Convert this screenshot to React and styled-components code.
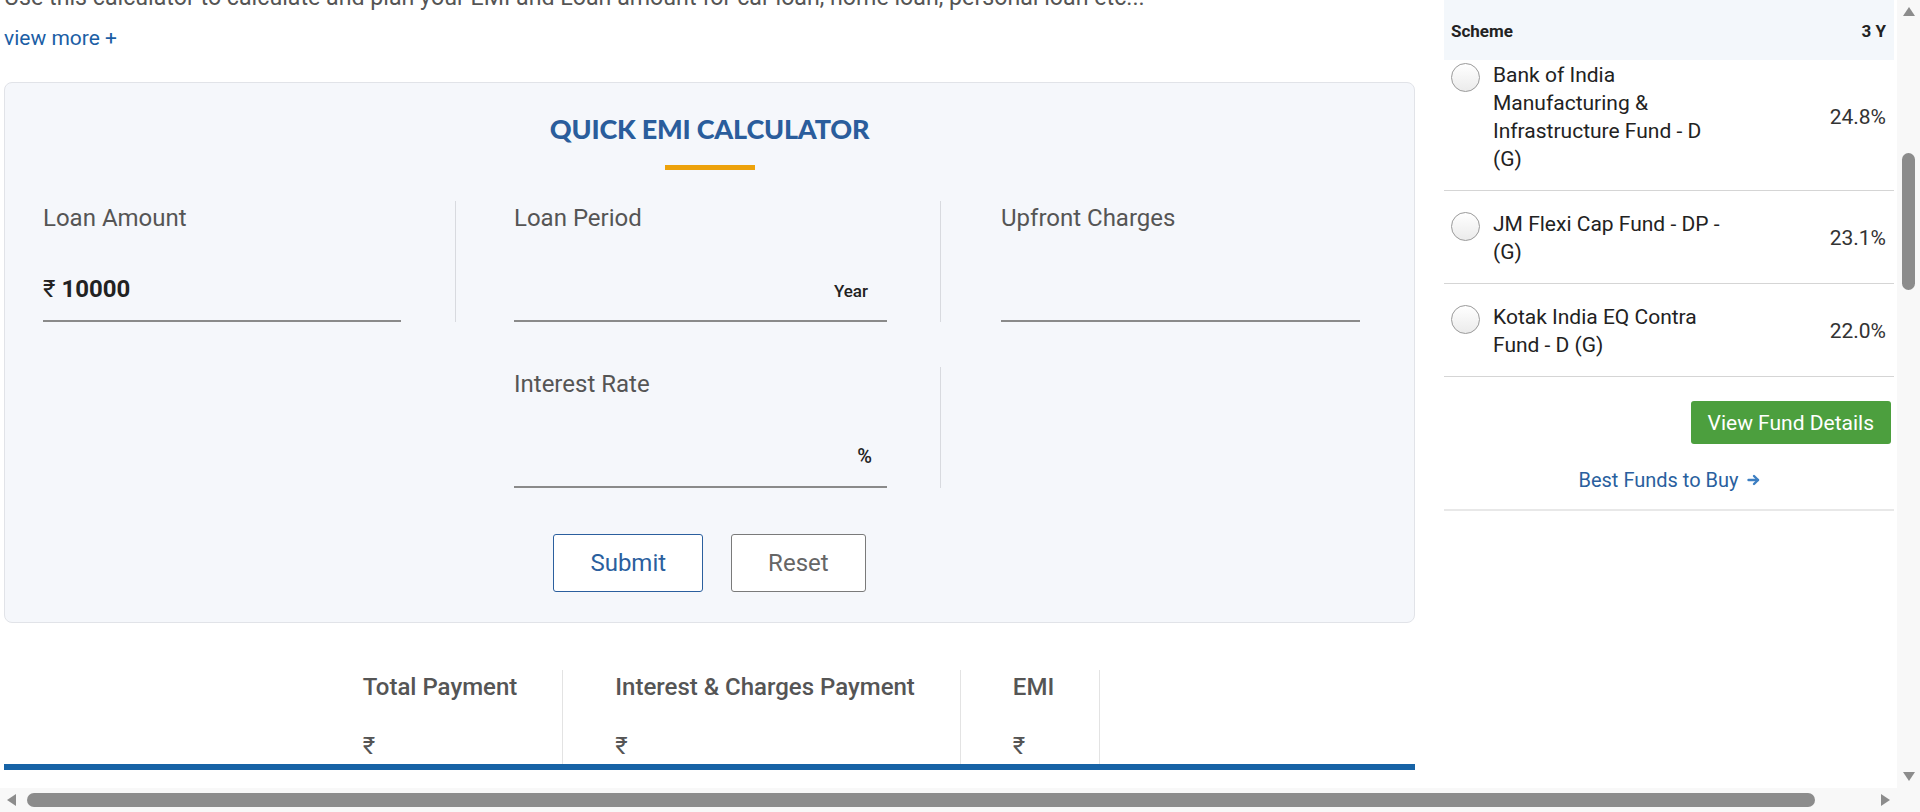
import styled, { createGlobalStyle } from 'styled-components'

const GlobalStyle = createGlobalStyle`
    html, body {
        margin: 0;
        padding: 0;
        background: #ffffff;
        overflow: hidden;
    }
    body {
        font-family: Roboto, "Liberation Sans", Arial, sans-serif;
    }
    * {
        box-sizing: border-box;
    }
`

const Screen = styled.div`
    width: 1920px;
    height: 812px;
    display: flex;
    flex-direction: column;
    overflow: hidden;
`

const TopRow = styled.div`
    display: flex;
    height: 788px;
`

const BottomRow = styled.div`
    display: flex;
    height: 24px;
    background: #f8f8f8;
`

const Viewport = styled.div`
    flex: 1;
    overflow: hidden;
`

const Page = styled.div`
    display: flex;
    align-items: flex-start;
    gap: 29px;
    padding-left: 4px;
`

// ---------- main column ----------

const MainCol = styled.div`
    width: 1411px;
    flex: none;
`

const Intro = styled.p`
    margin: -17px 0 0;
    font-size: 23.2px;
    line-height: 28px;
    color: #555555;
    white-space: nowrap;
`

const ViewMore = styled.a`
    display: block;
    margin-top: 13px;
    font-size: 21px;
    line-height: 28px;
    color: #1b5ea5;
    text-decoration: none;
`

const Card = styled.div`
    margin-top: 30px;
    background: #f5f7fb;
    border: 1px solid #e1e3e8;
    border-radius: 8px;
    padding: 29px 0 30px;
`

const Title = styled.h2`
    margin: 0;
    text-align: center;
    font-family: Lato, "Open Sans", sans-serif;
    font-weight: 900;
    font-size: 27px;
    line-height: 34px;
    color: #2a5d9c;
    letter-spacing: -0.2px;
`

const Accent = styled.div`
    width: 90px;
    height: 5px;
    margin: 19px auto 0;
    background: #eda20b;
`

const FieldGrid = styled.div`
    display: grid;
    grid-template-columns: 413px 485px 1fr;
    row-gap: 45px;
    margin: 31px 54px 0 38px;
`

const Cell = styled.div`
    height: 121px;
    padding: ${p => p.$pad};
    border-right: ${p => (p.$divider ? '1px solid #d8dadf' : 'none')};
`

const Label = styled.div`
    font-size: 24px;
    line-height: 34px;
    color: #555555;
`

const Field = styled.div`
    height: 87px;
    padding-top: 40px;
    display: flex;
    align-items: baseline;
    border-bottom: 2px solid #8a8a8a;
`

const Value = styled.span`
    font-size: 24px;
    line-height: 28px;
    font-weight: 700;
    color: #222222;
`

const Currency = styled.span`
    font-weight: 400;
`

const Unit = styled.span`
    margin-left: auto;
    padding-right: ${p => p.$right}px;
    font-size: ${p => p.$size}px;
    line-height: ${p => p.$lh}px;
    font-weight: 500;
    color: #222222;
`

const Actions = styled.div`
    display: flex;
    justify-content: center;
    gap: 28px;
    margin-top: 46px;
`

const Btn = styled.button`
    height: 58px;
    padding: 0 36px;
    background: #ffffff;
    border: 1px solid ${p => (p.$primary ? '#2b5f9e' : '#7a7a7a')};
    border-radius: 3px;
    color: ${p => (p.$primary ? '#2b5f9e' : '#666666')};
    font-family: Roboto, sans-serif;
    font-size: 24px;
`

const Results = styled.div`
    display: flex;
    justify-content: center;
    margin-top: 47px;
    padding-right: 8px;
    border-bottom: 6px solid #1763a6;
`

const ResultCell = styled.div`
    padding: 0 45px 1px 52px;
    border-right: 1px solid #e3e3e3;
`

const ResultHead = styled.div`
    font-size: 24px;
    line-height: 34px;
    font-weight: 500;
    color: #555555;
    white-space: nowrap;
`

const ResultValue = styled.div`
    margin-top: 25px;
    font-size: 24px;
    line-height: 34px;
    color: #555555;
`

// ---------- sidebar ----------

const Sidebar = styled.aside`
    width: 450px;
    flex: none;
`

const SideHead = styled.div`
    height: 60px;
    display: flex;
    align-items: center;
    justify-content: space-between;
    padding: 1px 8px 0 7px;
    background: #f3f7fb;
    font-size: 17px;
    font-weight: 700;
    color: #222222;
`

const FundList = styled.div`
    overflow: hidden;
`

const FundRows = styled.div`
    margin-top: -18px;
`

const FundRow = styled.div`
    display: flex;
    align-items: flex-start;
    padding: 19px 8px 17px 7px;
    border-bottom: 1px solid #d5d5d5;
`

const Radio = styled.span`
    flex: none;
    width: 29px;
    height: 29px;
    margin-top: 2px;
    border-radius: 50%;
    border: 1px solid #9a9a9a;
    background: linear-gradient(#ffffff, #ebebeb);
`

const FundName = styled.div`
    width: 232px;
    margin-left: 13px;
    font-size: 21px;
    line-height: 28px;
    color: #222222;
`

const FundReturn = styled.div`
    margin-left: auto;
    align-self: center;
    font-size: 21px;
    line-height: 28px;
    color: #333333;
`

const FundActions = styled.div`
    display: flex;
    flex-direction: column;
    align-items: center;
    padding: 24px 0 15px;
    border-bottom: 2px solid #e8e8e8;
`

const DetailsBtn = styled.button`
    align-self: flex-end;
    margin-right: 3px;
    height: 43px;
    padding: 0 17px;
    border: none;
    border-radius: 3px;
    background: #4c9f3e;
    color: #ffffff;
    font-family: Roboto, sans-serif;
    font-size: 21px;
`

const BestLink = styled.a`
    margin-top: 22px;
    display: flex;
    align-items: center;
    gap: 8px;
    font-size: 20px;
    line-height: 28px;
    color: #2a5f9e;
    text-decoration: none;
`

// ---------- scrollbars ----------

const VBar = styled.div`
    width: 23px;
    flex: none;
    display: flex;
    flex-direction: column;
    background: #f8f8f8;
`

const HBar = styled.div`
    flex: 1;
    display: flex;
`

const ArrowBox = styled.div`
    flex: none;
    width: ${p => p.$w}px;
    height: ${p => p.$h}px;
    display: flex;
    align-items: center;
    justify-content: center;
`

const tri = {
    up: 'border-width: 0 6.5px 9px 6.5px; border-color: transparent transparent #8c8c8c transparent;',
    down: 'border-width: 9px 6.5px 0 6.5px; border-color: #8c8c8c transparent transparent transparent;',
    left: 'border-width: 6.5px 9px 6.5px 0; border-color: transparent #8c8c8c transparent transparent;',
    right: 'border-width: 6.5px 0 6.5px 9px; border-color: transparent transparent transparent #8c8c8c;',
}

const Tri = styled.span`
    width: 0;
    height: 0;
    border-style: solid;
    ${p => tri[p.$dir]}
`

const Track = styled.div`
    flex: 1;
    display: flex;
    flex-direction: ${p => (p.$vertical ? 'column' : 'row')};
    align-items: center;
`

const Thumb = styled.div`
    flex: none;
    border-radius: 7px;
    background: #8c8c8c;
    ${p => (p.$vertical
        ? `width: 13px; height: ${p.$size}px; margin-top: ${p.$offset}px;`
        : `height: 14px; width: ${p.$size}px; margin-left: ${p.$offset}px;`)}
`

const Corner = styled.div`
    width: 23px;
    flex: none;
`

const funds = [
    { name: 'Bank of India Manufacturing & Infrastructure Fund - D (G)', ret: '24.8%' },
    { name: 'JM Flexi Cap Fund - DP - (G)', ret: '23.1%' },
    { name: 'Kotak India EQ Contra Fund - D (G)', ret: '22.0%' },
]

const results = ['Total Payment', 'Interest & Charges Payment', 'EMI']

const Arrow = () => (
    <svg width="13" height="12" viewBox="0 0 13 12" fill="none" stroke="#3c7ec2" strokeWidth="2.4" strokeLinecap="round" strokeLinejoin="round">
        <path d="M1.5 6h9.5" />
        <path d="M7 2l4 4-4 4" />
    </svg>
)

export default function App() {
    return (
        <>
            <GlobalStyle />
            <Screen>
                <TopRow>
                    <Viewport>
                        <Page>
                            <MainCol>
                                <Intro>Use this calculator to calculate and plan your EMI and Loan amount for car loan, home loan, personal loan etc...</Intro>
                                <ViewMore href="#">view more +</ViewMore>
                                <Card>
                                    <Title>QUICK EMI CALCULATOR</Title>
                                    <Accent />
                                    <FieldGrid>
                                        <Cell $pad="0 54px 0 0" $divider>
                                            <Label>Loan Amount</Label>
                                            <Field>
                                                <Value><Currency>₹</Currency> 10000</Value>
                                            </Field>
                                        </Cell>
                                        <Cell $pad="0 53px 0 58px" $divider>
                                            <Label>Loan Period</Label>
                                            <Field>
                                                <Unit $size={17} $lh={32} $right={19}>Year</Unit>
                                            </Field>
                                        </Cell>
                                        <Cell $pad="0 0 0 60px">
                                            <Label>Upfront Charges</Label>
                                            <Field />
                                        </Cell>
                                        <Cell $pad="0" />
                                        <Cell $pad="0 53px 0 58px" $divider>
                                            <Label>Interest Rate</Label>
                                            <Field>
                                                <Unit $size={20} $lh={30} $right={15}>%</Unit>
                                            </Field>
                                        </Cell>
                                        <Cell $pad="0" />
                                    </FieldGrid>
                                    <Actions>
                                        <Btn $primary>Submit</Btn>
                                        <Btn>Reset</Btn>
                                    </Actions>
                                </Card>
                                <Results>
                                    {results.map(r => (
                                        <ResultCell key={r}>
                                            <ResultHead>{r}</ResultHead>
                                            <ResultValue>₹</ResultValue>
                                        </ResultCell>
                                    ))}
                                </Results>
                            </MainCol>
                            <Sidebar>
                                <SideHead>
                                    <span>Scheme</span>
                                    <span>3 Y</span>
                                </SideHead>
                                <FundList>
                                    <FundRows>
                                        {funds.map(f => (
                                            <FundRow key={f.name}>
                                                <Radio />
                                                <FundName>{f.name}</FundName>
                                                <FundReturn>{f.ret}</FundReturn>
                                            </FundRow>
                                        ))}
                                    </FundRows>
                                </FundList>
                                <FundActions>
                                    <DetailsBtn>View Fund Details</DetailsBtn>
                                    <BestLink href="#">Best Funds to Buy <Arrow /></BestLink>
                                </FundActions>
                            </Sidebar>
                        </Page>
                    </Viewport>
                    <VBar>
                        <ArrowBox $w={23} $h={23}><Tri $dir="up" /></ArrowBox>
                        <Track $vertical>
                            <Thumb $vertical $size={137} $offset={130} />
                        </Track>
                        <ArrowBox $w={23} $h={23}><Tri $dir="down" /></ArrowBox>
                    </VBar>
                </TopRow>
                <BottomRow>
                    <HBar>
                        <ArrowBox $w={22} $h={24}><Tri $dir="left" /></ArrowBox>
                        <Track>
                            <Thumb $size={1788} $offset={5} />
                        </Track>
                        <ArrowBox $w={23} $h={24}><Tri $dir="right" /></ArrowBox>
                    </HBar>
                    <Corner />
                </BottomRow>
            </Screen>
        </>
    )
}
